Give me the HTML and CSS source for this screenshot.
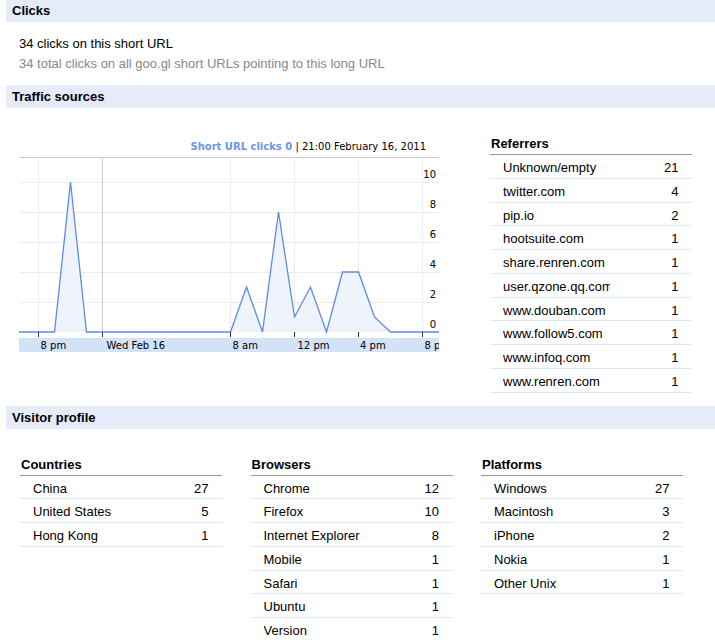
FILE: index.html
```html
<!DOCTYPE html>
<html lang="en">
<head>
    <meta charset="UTF-8">
    <title>goo.gl URL analytics</title>
    <link rel="stylesheet" href="styles.css">
</head>
<body>
    <div class="page">
        <h2 class="section-head first">Clicks</h2>
        <div class="clicks">
            <p>34 clicks on this short URL</p>
            <p class="muted">34 total clicks on all goo.gl short URLs pointing to this long URL</p>
        </div>

        <h2 class="section-head">Traffic sources</h2>
        <div class="traffic">
            <div class="chart">
                <svg width="420" height="220" viewBox="0 0 420 220">
                    <text class="chart-title" x="407" y="15" text-anchor="end"><tspan class="series">Short URL clicks 0</tspan> | 21:00 February 16, 2011</text>

                    <!-- grid -->
                    <line class="frame" x1="0" y1="22.5" x2="420" y2="22.5"/>
                    <g class="grid">
                        <line x1="0" y1="47.5" x2="420" y2="47.5"/>
                        <line x1="0" y1="77.5" x2="420" y2="77.5"/>
                        <line x1="0" y1="107.5" x2="420" y2="107.5"/>
                        <line x1="0" y1="137.5" x2="420" y2="137.5"/>
                        <line x1="0" y1="167.5" x2="420" y2="167.5"/>
                        <line x1="19.5" y1="23" x2="19.5" y2="197"/>
                        <line x1="211.5" y1="23" x2="211.5" y2="197"/>
                        <line x1="275.5" y1="23" x2="275.5" y2="197"/>
                        <line x1="339.5" y1="23" x2="339.5" y2="197"/>
                        <line x1="403.5" y1="23" x2="403.5" y2="197"/>
                    </g>
                    <line class="day" x1="83.5" y1="23" x2="83.5" y2="197"/>

                    <!-- y axis -->
                    <g class="axis-label" text-anchor="end">
                        <text x="417" y="43">10</text>
                        <text x="417" y="73">8</text>
                        <text x="417" y="103">6</text>
                        <text x="417" y="133">4</text>
                        <text x="417" y="163">2</text>
                        <text x="417" y="193">0</text>
                    </g>

                    <!-- hourly clicks -->
                    <polygon class="area" points="0,197 35.5,197 51.5,47 67.5,197 211.5,197 227.5,152 243.5,197 259.5,77 275.5,182 291.5,152 307.5,197 323.5,137 339.5,137 355.5,182 371.5,197 420,197"/>
                    <polyline class="line" points="0,197 35.5,197 51.5,47 67.5,197 211.5,197 227.5,152 243.5,197 259.5,77 275.5,182 291.5,152 307.5,197 323.5,137 339.5,137 355.5,182 371.5,197 420,197"/>

                    <!-- x axis -->
                    <g class="ticks">
                        <line x1="19.5" y1="197" x2="19.5" y2="202"/>
                        <line x1="83.5" y1="197" x2="83.5" y2="202"/>
                        <line x1="211.5" y1="197" x2="211.5" y2="202"/>
                        <line x1="275.5" y1="197" x2="275.5" y2="202"/>
                        <line x1="339.5" y1="197" x2="339.5" y2="202"/>
                        <line x1="403.5" y1="197" x2="403.5" y2="202"/>
                    </g>
                    <rect class="band" x="0" y="203" width="420" height="14"/>
                    <g class="axis-label">
                        <text x="21.5" y="214">8 pm</text>
                        <text x="87.5" y="214">Wed Feb 16</text>
                        <text x="213.5" y="214">8 am</text>
                        <text x="278.5" y="214">12 pm</text>
                        <text x="341" y="214">4 pm</text>
                        <text x="405.5" y="214">8 pm</text>
                    </g>
                </svg>
            </div>

            <div class="stats-table referrers">
                <div class="stats-head">Referrers</div>
                <div class="stats-row"><span class="stats-name">Unknown/empty</span><span class="stats-count">21</span></div>
                <div class="stats-row"><span class="stats-name">twitter.com</span><span class="stats-count">4</span></div>
                <div class="stats-row"><span class="stats-name">pip.io</span><span class="stats-count">2</span></div>
                <div class="stats-row"><span class="stats-name">hootsuite.com</span><span class="stats-count">1</span></div>
                <div class="stats-row"><span class="stats-name">share.renren.com</span><span class="stats-count">1</span></div>
                <div class="stats-row"><span class="stats-name">user.qzone.qq.com</span><span class="stats-count">1</span></div>
                <div class="stats-row"><span class="stats-name">www.douban.com</span><span class="stats-count">1</span></div>
                <div class="stats-row"><span class="stats-name">www.follow5.com</span><span class="stats-count">1</span></div>
                <div class="stats-row"><span class="stats-name">www.infoq.com</span><span class="stats-count">1</span></div>
                <div class="stats-row"><span class="stats-name">www.renren.com</span><span class="stats-count">1</span></div>
            </div>
        </div>

        <h2 class="section-head">Visitor profile</h2>
        <div class="profile">
            <div class="stats-table">
                <div class="stats-head">Countries</div>
                <div class="stats-row"><span class="stats-name">China</span><span class="stats-count">27</span></div>
                <div class="stats-row"><span class="stats-name">United States</span><span class="stats-count">5</span></div>
                <div class="stats-row"><span class="stats-name">Hong Kong</span><span class="stats-count">1</span></div>
            </div>
            <div class="stats-table">
                <div class="stats-head">Browsers</div>
                <div class="stats-row"><span class="stats-name">Chrome</span><span class="stats-count">12</span></div>
                <div class="stats-row"><span class="stats-name">Firefox</span><span class="stats-count">10</span></div>
                <div class="stats-row"><span class="stats-name">Internet Explorer</span><span class="stats-count">8</span></div>
                <div class="stats-row"><span class="stats-name">Mobile</span><span class="stats-count">1</span></div>
                <div class="stats-row"><span class="stats-name">Safari</span><span class="stats-count">1</span></div>
                <div class="stats-row"><span class="stats-name">Ubuntu</span><span class="stats-count">1</span></div>
                <div class="stats-row"><span class="stats-name">Version</span><span class="stats-count">1</span></div>
            </div>
            <div class="stats-table">
                <div class="stats-head">Platforms</div>
                <div class="stats-row"><span class="stats-name">Windows</span><span class="stats-count">27</span></div>
                <div class="stats-row"><span class="stats-name">Macintosh</span><span class="stats-count">3</span></div>
                <div class="stats-row"><span class="stats-name">iPhone</span><span class="stats-count">2</span></div>
                <div class="stats-row"><span class="stats-name">Nokia</span><span class="stats-count">1</span></div>
                <div class="stats-row"><span class="stats-name">Other Unix</span><span class="stats-count">1</span></div>
            </div>
        </div>
    </div>
</body>
</html>
```

FILE: styles.css
```css
body {
    margin: 0;
    font-family: "Liberation Sans", Arial, sans-serif;
    font-size: 13px;
    color: #000;
    background-color: #fff;
}

.page {
    padding-left: 6px;
}

.section-head {
    margin: 0;
    height: 23px;
    padding: 1px 0 0 6px;
    box-sizing: border-box;
    line-height: 22px;
    font-size: 13px;
    font-weight: bold;
    background-color: #e5ebf8;
}

    .section-head.first {
        margin-top: -1px;
    }

.clicks {
    padding: 12px 0 11px 13px;
}

    .clicks p {
        margin: 0;
        line-height: 20px;
    }

    .clicks .muted {
        color: #888;
    }

.traffic {
    display: flex;
    align-items: flex-start;
    padding: 27px 0 13px 13px;
}

.chart {
    width: 420px;
    height: 220px;
}

    .chart svg {
        display: block;
    }

.chart-title {
    font-family: "DejaVu Sans", Verdana, sans-serif;
    font-size: 10px;
    fill: #000;
}

    .chart-title .series {
        font-size: 10px;
        font-weight: bold;
        fill: #6b94e6;
    }

.frame {
    stroke: #c8c8c8;
    stroke-width: 1;
}

.grid line {
    stroke: #ebebf1;
    stroke-width: 1;
}

.day {
    stroke: #c9d0c9;
    stroke-width: 1;
}

.axis-label {
    font-family: "DejaVu Sans", Verdana, sans-serif;
    font-size: 10px;
    fill: #000;
}

.area {
    fill: #eef3fc;
    stroke: none;
}

.line {
    fill: none;
    stroke: #5b8de6;
    stroke-width: 1.3;
    stroke-linejoin: miter;
}

.ticks line {
    stroke: #333;
    stroke-width: 1;
}

.band {
    fill: #d2e2f7;
}

.referrers {
    margin-left: 51px;
}

.profile {
    display: flex;
    align-items: flex-start;
    gap: 28.5px;
    padding: 27px 0 0 14px;
}

.stats-table {
    width: 202px;
}

.stats-head {
    padding: 0 0 2px 1px;
    line-height: 17px;
    font-weight: bold;
    border-bottom: 1px solid #999;
}

.stats-row {
    display: flex;
    height: 23.75px;
    box-sizing: border-box;
    padding: 4px 13.5px 0 13px;
    line-height: 17px;
    border-bottom: 1px solid #dfe7f5;
}

.stats-name {
    width: 107px;
    overflow: hidden;
    white-space: nowrap;
}

.stats-count {
    flex: 1;
    text-align: right;
}
```
